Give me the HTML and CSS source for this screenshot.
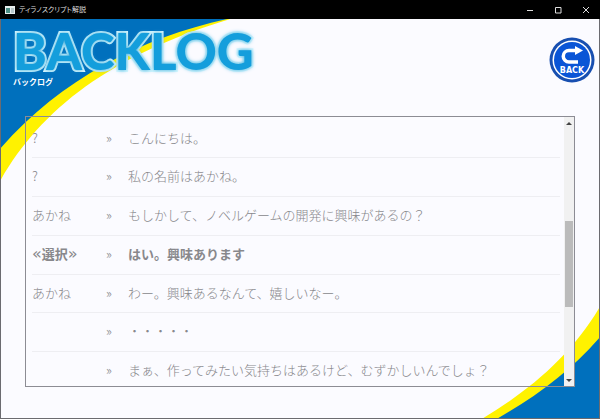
FILE: index.html
```html
<!DOCTYPE html>
<html lang="ja">
<head>
  <meta charset="UTF-8" />
  <title>ティラノスクリプト解説</title>
  <link rel="stylesheet" href="styles.css">
</head>
<body>

  <header class="titlebar">
    <svg class="app-icon" viewBox="0 0 10 8" aria-hidden="true">
      <rect width="10" height="8" fill="#e8eeee" />
      <rect x="1" y="2" width="4" height="5" fill="#4c8f86" />
      <rect x="6" y="2" width="3" height="5" fill="#b9c8ca" />
    </svg>
    <span class="window-title">ティラノスクリプト解説</span>
    <button class="window-button" aria-label="最小化">
      <svg viewBox="0 0 8 8"><path d="M1 4.5h6" /></svg>
    </button>
    <button class="window-button" aria-label="最大化">
      <svg viewBox="0 0 8 8"><path d="M1.5 1.5h5.5v5.5h-5.5z" /></svg>
    </button>
    <button class="window-button" aria-label="閉じる">
      <svg viewBox="0 0 8 8"><path d="M1 1l6 6M7 1l-6 6" /></svg>
    </button>
  </header>

  <main class="screen">
    <svg class="backdrop" viewBox="0 0 600 400" preserveAspectRatio="none" aria-hidden="true">
      <path fill="#fff200" d="M0 0H230C110 36 40 91 0 161z" />
      <path fill="#0070bd" d="M0 0H227C140 19 60 61 0 129z" />
      <path fill="#fff200" d="M600 400H484C532 371 572 337 600 290z" />
      <path fill="#0070bd" d="M600 400H499C539 377 572 352 600 320z" />
    </svg>

    <div class="heading">
      <div class="heading-text">
        <h1>BACKLOG</h1>
        <p>バックログ</p>
      </div>
      <button class="back-button" aria-label="BACK">
        <svg viewBox="0 0 46 46" aria-hidden="true">
          <circle cx="23" cy="23" r="22.5" fill="#184fb0" />
          <circle cx="23" cy="23" r="19.5" fill="#fff" />
          <circle cx="23" cy="23" r="18" fill="#0a55d6" />
          <path d="M27 13.500H20a5.500 5.500 0 0 0 0 11.500H29" fill="none" stroke="#fff" stroke-width="3.500" />
          <path d="M26 9l8 4.500l-8 4.500z" fill="#fff" />
        </svg>
        <span>BACK</span>
      </button>
    </div>

    <div class="log">
      <div class="log-view">
        <table>
          <tbody>
            <tr><th>?</th><td class="mark">»</td><td>こんにちは。</td></tr>
            <tr><th>?</th><td class="mark">»</td><td>私の名前はあかね。</td></tr>
            <tr><th>あかね</th><td class="mark">»</td><td>もしかして、ノベルゲームの開発に興味があるの？</td></tr>
            <tr class="choice"><th><span class="quote">«</span>選択<span class="quote">»</span></th><td class="mark">»</td><td>はい。興味あります</td></tr>
            <tr><th>あかね</th><td class="mark">»</td><td>わー。興味あるなんて、嬉しいなー。</td></tr>
            <tr><th></th><td class="mark">»</td><td>・・・・・</td></tr>
            <tr><th></th><td class="mark">»</td><td>まぁ、作ってみたい気持ちはあるけど、むずかしいんでしょ？</td></tr>
          </tbody>
        </table>
      </div>
      <div class="scrollbar">
        <button aria-label="上へ"><svg viewBox="0 0 6 4"><path d="M0 4l3-3 3 3z" /></svg></button>
        <div class="track"><div class="thumb"></div></div>
        <button aria-label="下へ"><svg viewBox="0 0 6 4"><path d="M0 0l3 3 3-3z" /></svg></button>
      </div>
    </div>
  </main>

</body>
</html>
```
FILE: styles.css
```css
* {
  box-sizing: border-box;
}

body {
  margin: 0;
  height: 100vh;
  display: flex;
  flex-direction: column;
  overflow: hidden;
  font-family: "Noto Sans CJK JP", sans-serif;
  background: #fbfbff;
}

button {
  padding: 0;
  border: none;
  background: none;
  cursor: pointer;
}

/* window frame */
.titlebar {
  display: flex;
  align-items: center;
  height: 19px;
  padding-left: 5px;
  background: #000;
  color: #ddd;
}

.app-icon {
  width: 10px;
  height: 8px;
  margin-right: 4px;
}

.window-title {
  flex: 1;
  font-size: 7px;
  line-height: 19px;
  font-feature-settings: "palt";
}

.window-button {
  display: flex;
  align-items: center;
  justify-content: center;
  width: 28px;
  height: 19px;
}

.window-button svg {
  width: 8px;
  height: 8px;
  fill: none;
  stroke: #ddd;
  stroke-width: 1;
}

.screen {
  position: relative;
  flex: 1;
  display: flex;
  flex-direction: column;
  min-height: 0;
  padding: 0 24px 31px;
  border: 1px solid #6b6b70;
  border-top: none;
}

.backdrop {
  position: absolute;
  inset: 0;
  width: 100%;
  height: 100%;
  z-index: -1;
}

/* heading */
.heading {
  display: flex;
  justify-content: space-between;
  height: 97px;
  margin: 0 -20px 0 -12px;
}

h1 {
  margin: 7px 0 0;
  font-family: Lato, sans-serif;
  font-size: 51px;
  font-weight: 900;
  line-height: 50px;
  color: #149edc;
  -webkit-text-stroke: 4px #d8f8ff;
  paint-order: stroke fill;
  text-shadow: 0 0 4px #3aa8d8;
}

.heading-text p {
  margin: 0;
  font-size: 8px;
  font-weight: bold;
  line-height: 12px;
  color: #fff;
}

.back-button {
  display: grid;
  width: 46px;
  height: 46px;
  margin-top: 18px;
  border-radius: 50%;
}

.back-button svg,
.back-button span {
  grid-area: 1 / 1;
}

.back-button span {
  align-self: end;
  padding-bottom: 8px;
  font-family: "DejaVu Sans", sans-serif;
  font-size: 8px;
  font-weight: bold;
  line-height: 9px;
  color: #fff;
}

/* log list */
.log {
  flex: 1;
  display: flex;
  min-height: 0;
  border: 1px solid #8c8c94;
}

.log-view {
  flex: 1;
  overflow: hidden;
  padding: 3px 4px 0 6px;
}

table {
  width: 100%;
  height: 271px;
  border-collapse: collapse;
  table-layout: fixed;
  font-size: 13px;
  line-height: 20px;
  color: #88888c;
}

tr {
  border-bottom: 1px solid #eeeef2;
}

th,
td {
  padding: 0 0 2px;
  text-align: left;
  font-weight: 300;
  white-space: nowrap;
}

th {
  width: 74px;
}

.mark {
  width: 22px;
}

.choice th,
.choice td {
  font-weight: bold;
}

.choice .mark {
  font-weight: 300;
}

.quote {
  font-family: "DejaVu Sans", sans-serif;
  font-size: 16px;
  font-weight: normal;
}

.scrollbar {
  display: flex;
  flex-direction: column;
  width: 10px;
  background: #f1f1f1;
}

.scrollbar button {
  display: flex;
  align-items: center;
  justify-content: center;
  height: 11px;
}

.scrollbar svg {
  width: 6px;
  height: 4px;
  fill: #444;
}

.track {
  flex: 1;
  display: flex;
  flex-direction: column;
  justify-content: flex-end;
}

.thumb {
  height: 35%;
  margin: 0 1px 68px;
  background: #bbb;
}
```
